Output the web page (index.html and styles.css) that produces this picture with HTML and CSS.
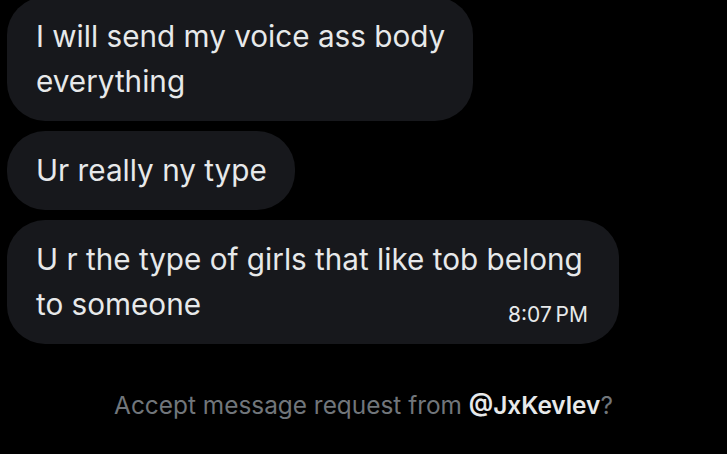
FILE: index.html
```html
<!DOCTYPE html>
<html>
<head>
<meta charset="utf-8">
<link rel="stylesheet" href="styles.css">
</head>
<body>
<div class="thread">
  <div class="bubble">I will send my voice ass body<br>everything</div>
  <div class="bubble">Ur really ny type</div>
  <div class="bubble last">
    <div class="line">U r the type of girls that like tob belong</div>
    <div class="line row"><span>to someone</span><span class="time">8:07&#8239;PM</span></div>
  </div>
</div>
<p class="request">Accept message request from <span class="handle">@JxKevlev</span>?</p>
</body>
</html>
```
FILE: styles.css
```css
html, body {
  margin: 0;
  padding: 0;
  background: #000;
}
body {
  width: 727px;
  height: 454px;
  overflow: hidden;
  font-family: "Inter", "Roboto", "Liberation Sans", sans-serif;
}
.thread {
  display: flex;
  flex-direction: column;
  align-items: flex-start;
  gap: 10px;
  padding-left: 7px;
  margin-top: -3px;
}
.bubble {
  background: #17181c;
  color: #e7e9ea;
  font-size: 29.7px;
  line-height: 45px;
  padding: 17px 28px 17px 29px;
  border-radius: 38px;
  box-sizing: border-box;
}
.bubble.last {
  width: 612px;
  padding-right: 31px;
}
.row {
  display: flex;
  justify-content: space-between;
  align-items: flex-start;
}
.time {
  font-size: 21px;
  line-height: 21px;
  margin-top: 22px;
  color: #e7e9ea;
}
.request {
  margin: 46px 0 0;
  text-align: center;
  font-size: 24.4px;
  color: #71767b;
}
.handle {
  color: #e7e9ea;
  font-weight: 600;
}
```
